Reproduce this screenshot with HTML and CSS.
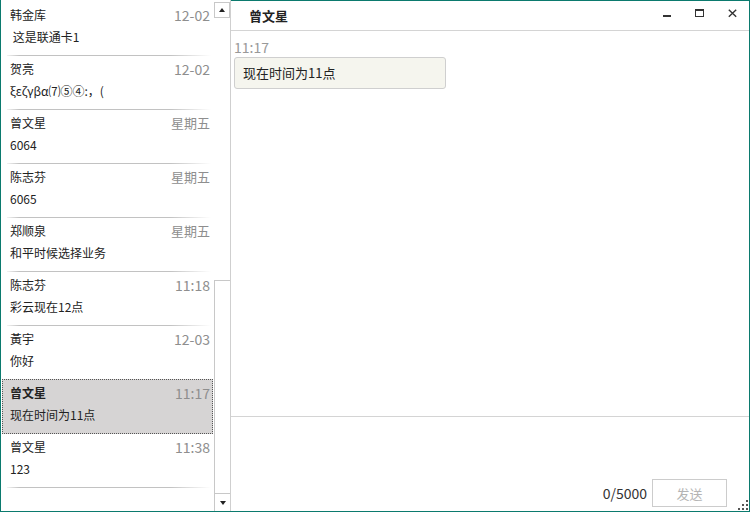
FILE: index.html
```html
<!DOCTYPE html>
<html>
<head>
<meta charset="utf-8">
<link rel="stylesheet" href="styles.css">
</head>
<body>
<div class="win">
  <div class="side">
    <div class="list">
      <div class="item">
        <div class="row"><span class="name">韩金库</span><span class="time">12-02</span></div>
        <div class="preview">&nbsp;这是联通卡1</div>
      </div>
      <div class="item">
        <div class="row"><span class="name">贺亮</span><span class="time">12-02</span></div>
        <div class="preview">ξεζγβα⑺⑤④:，(</div>
      </div>
      <div class="item">
        <div class="row"><span class="name">曾文星</span><span class="time week">星期五</span></div>
        <div class="preview">6064</div>
      </div>
      <div class="item">
        <div class="row"><span class="name">陈志芬</span><span class="time week">星期五</span></div>
        <div class="preview">6065</div>
      </div>
      <div class="item">
        <div class="row"><span class="name">郑顺泉</span><span class="time week">星期五</span></div>
        <div class="preview">和平时候选择业务</div>
      </div>
      <div class="item">
        <div class="row"><span class="name">陈志芬</span><span class="time">11:18</span></div>
        <div class="preview">彩云现在12点</div>
      </div>
      <div class="item">
        <div class="row"><span class="name">黃宇</span><span class="time">12-03</span></div>
        <div class="preview">你好</div>
      </div>
      <div class="item sel">
        <div class="row"><span class="name">曾文星</span><span class="time">11:17</span></div>
        <div class="preview">现在时间为11点</div>
      </div>
      <div class="item">
        <div class="row"><span class="name">曾文星</span><span class="time">11:38</span></div>
        <div class="preview">123</div>
      </div>
    </div>
    <div class="scroll">
      <div class="sbtn"><span class="tri-up"></span></div>
      <div class="track"></div>
      <div class="thumb">
        <div class="sbtn down"><span class="tri-down"></span></div>
      </div>
    </div>
  </div>
  <div class="main">
    <div class="header">
      <div class="title">曾文星</div>
      <div class="ctrls">
        <div class="ctrl"><svg width="10" height="10" viewBox="0 0 10 10"><rect x="1" y="6" width="8" height="2" fill="#333"/></svg></div>
        <div class="ctrl"><svg width="10" height="10" viewBox="0 0 10 10"><rect x="0.5" y="0.5" width="8" height="7" fill="none" stroke="#333" stroke-width="1"/><rect x="0.5" y="0.5" width="8" height="1.5" fill="#333"/></svg></div>
        <div class="ctrl"><svg width="10" height="10" viewBox="0 0 10 10"><path d="M0.8 0.8 L8.2 7.8 M8.2 0.8 L0.8 7.8" stroke="#333" stroke-width="1.4" fill="none"/></svg></div>
      </div>
    </div>
    <div class="msgs">
      <div class="mtime">11:17</div>
      <div class="bubble">现在时间为11点</div>
    </div>
    <div class="input">
      <div class="bar">
        <span class="count">0/5000</span>
        <span class="send">发送</span>
      </div>
      <svg class="grip" width="12" height="12" viewBox="0 0 12 12">
        <rect x="9" y="1" width="2" height="2" fill="#555"/>
        <rect x="5" y="5" width="2" height="2" fill="#555"/>
        <rect x="9" y="5" width="2" height="2" fill="#555"/>
        <rect x="1" y="9" width="2" height="2" fill="#555"/>
        <rect x="5" y="9" width="2" height="2" fill="#555"/>
        <rect x="9" y="9" width="2" height="2" fill="#555"/>
      </svg>
    </div>
  </div>
</div>
</body>
</html>
```
FILE: styles.css
```css
html, body {
  margin: 0;
  padding: 0;
  background: #ffffff;
}
body {
  font-family: "Noto Sans CJK SC", "Noto Sans", sans-serif;
  color: #222;
}
.win {
  width: 750px;
  height: 512px;
  box-sizing: border-box;
  border: 1px solid #0b7a6e;
  border-top: none;
  display: flex;
  background: #fff;
}
.side {
  width: 229px;
  border-right: 1px solid #cfcfcf;
  display: flex;
  flex-shrink: 0;
}
.list {
  width: 213px;
  padding-top: 2px;
  overflow: hidden;
}
.item {
  height: 54px;
  box-sizing: border-box;
  padding: 3px 4px 0 9px;
  background: linear-gradient(to right, rgba(190,190,190,0.2), #c2c2c2 6%, #c2c2c2 80%, rgba(200,200,200,0)) left 6px bottom / 204px 1px no-repeat;
}
.item.sel {
  margin: -1px 1px 0 1px;
  height: 55px;
  border: 1px dotted #555;
  padding: 3px 2px 0 7px;
  background: #d6d4d4;
}
.item.sel .name {
  font-weight: bold;
}
.row {
  display: flex;
  justify-content: space-between;
  align-items: center;
  height: 20px;
}
.name {
  font-size: 12px;
  line-height: 20px;
  color: #222;
}
.time {
  font-size: 14px;
  line-height: 20px;
  color: #8e8e8e;
}
.time.week {
  font-size: 13px;
}
.preview {
  font-size: 12px;
  line-height: 20px;
  margin-top: 2px;
  color: #222;
  white-space: nowrap;
}
.scroll {
  width: 16px;
  display: flex;
  flex-direction: column;
}
.sbtn {
  width: 16px;
  height: 16px;
  box-sizing: border-box;
  border: 1px solid #c8c8c8;
  margin-top: 2px;
  display: flex;
  align-items: center;
  justify-content: center;
}
.sbtn.down {
  border: none;
  border-top: 1px solid #c8c8c8;
  margin-top: 0;
  height: 18px;
  width: 15px;
}
.tri-up {
  width: 0;
  height: 0;
  border-left: 3.5px solid transparent;
  border-right: 3.5px solid transparent;
  border-bottom: 4px solid #222;
}
.tri-down {
  width: 0;
  height: 0;
  border-left: 3.5px solid transparent;
  border-right: 3.5px solid transparent;
  border-top: 4px solid #222;
}
.track {
  height: 262px;
}
.thumb {
  flex: 1;
  border-left: 1px solid #c8c8c8;
  border-top: 1px solid #c8c8c8;
  display: flex;
  flex-direction: column;
  justify-content: flex-end;
}
.main {
  flex: 1;
  display: flex;
  flex-direction: column;
  border-top: 1px solid #0b7a6e;
  position: relative;
}
.header {
  height: 29px;
  border-bottom: 1px solid #d4d4d4;
  display: flex;
  align-items: center;
  justify-content: space-between;
  padding-left: 18px;
}
.title {
  font-size: 13px;
  font-weight: bold;
  color: #222;
}
.ctrls {
  display: flex;
  height: 29px;
}
.ctrl {
  width: 33px;
  height: 29px;
  display: flex;
  justify-content: center;
  align-items: flex-start;
}
.ctrl svg {
  margin-top: 8px;
}
.msgs {
  flex: 1;
  padding: 8px 0 0 3px;
}
.mtime {
  font-size: 14px;
  line-height: 16px;
  color: #999;
}
.bubble {
  margin-top: 2px;
  width: 212px;
  height: 32px;
  box-sizing: border-box;
  border: 1px solid #cfcfcf;
  border-radius: 3px;
  background: #f5f5ee;
  padding-left: 8px;
  font-size: 13px;
  line-height: 30px;
  color: #222;
}
.input {
  height: 95px;
  box-sizing: border-box;
  border-top: 1px solid #d4d4d4;
  display: flex;
  flex-direction: column;
  justify-content: flex-end;
  padding: 0 22px 4px 0;
  position: relative;
}
.bar {
  display: flex;
  justify-content: flex-end;
  align-items: center;
  gap: 5px;
}
.count {
  font-size: 14px;
  color: #333;
}
.send {
  width: 75px;
  height: 28px;
  box-sizing: border-box;
  border: 1px solid #cccccc;
  display: flex;
  align-items: center;
  justify-content: center;
  font-size: 13px;
  color: #b4b4b4;
  background: #fff;
}
.grip {
  position: absolute;
  right: 0;
  bottom: 0;
}
```
